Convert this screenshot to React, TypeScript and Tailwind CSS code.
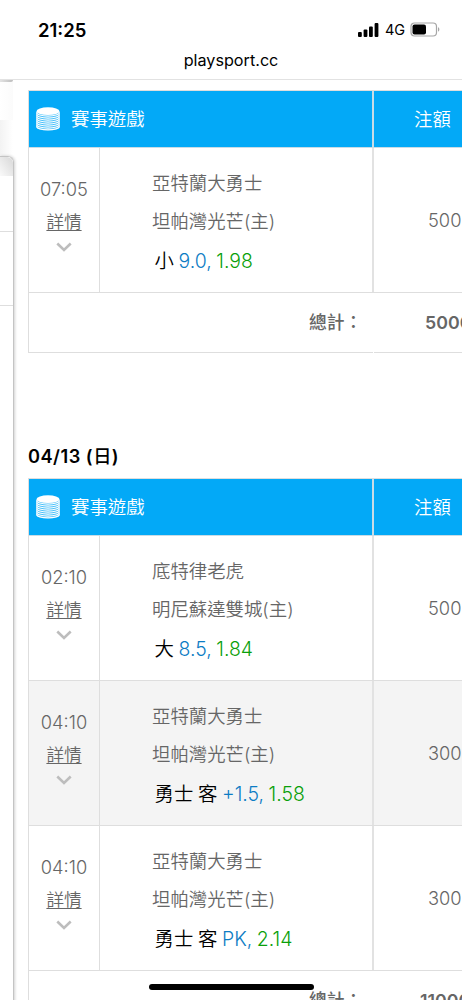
import React from 'react';

interface Bet {
  time: string;
  away: string;
  home: string;
  pick: string;
  line: string;
  odds: string;
  amount: string;
  shaded?: boolean;
}

const firstDay: Bet[] = [
  { time: '07:05', away: '亞特蘭大勇士', home: '坦帕灣光芒(主)', pick: '小', line: '9.0,', odds: '1.98', amount: '5000' },
];

const secondDay: Bet[] = [
  { time: '02:10', away: '底特律老虎', home: '明尼蘇達雙城(主)', pick: '大', line: '8.5,', odds: '1.84', amount: '5000' },
  { time: '04:10', away: '亞特蘭大勇士', home: '坦帕灣光芒(主)', pick: '勇士 客', line: '+1.5,', odds: '1.58', amount: '3000', shaded: true },
  { time: '04:10', away: '亞特蘭大勇士', home: '坦帕灣光芒(主)', pick: '勇士 客', line: 'PK,', odds: '2.14', amount: '3000' },
];

const CoinsIcon = () => (
  <svg className="w-6 h-6 shrink-0" viewBox="0 0 24 24" fill="none">
    <path d="M.5 4.500v15c0 2.200 5.100 3.800 11.500 3.800s11.500-1.600 11.500-3.800v-15z" fill="#fff" fillOpacity=".25" />
    {[5.5, 7.5, 9.5, 11.5, 13.5, 15.5, 17.5, 19.3].map((y) => (
      <path key={y} d={`M.5 ${y}c0 2 5 3.600 11.500 3.600s11.500-1.600 11.500-3.600`} stroke="#fff" strokeWidth="1.200" />
    ))}
    <path d="M.8 4.500v15M23.200 4.500v15" stroke="#fff" strokeOpacity=".6" />
    <ellipse cx="12" cy="4.200" rx="11.500" ry="3.900" fill="#fff" />
  </svg>
);

const Chevron = () => (
  <svg className="w-4 h-[10px] mt-[4px]" viewBox="0 0 16 10" fill="none">
    <path d="M1.300 1.500 8 7.900l6.700-6.400" stroke="#bdbdbd" strokeWidth="2.600" />
  </svg>
);

const StatusBar = () => (
  <header className="h-20 shrink-0 border-b border-[#e2e2e2] bg-white text-black">
    <div className="flex h-[48px] items-center pt-[11px] pl-[38px] pr-[22px]">
      <span className="text-[18.5px] font-semibold leading-6">21:25</span>
      <svg className="ml-auto w-[21px] h-[14px]" viewBox="0 0 21 14">
        <rect x="0" y="9" width="3.800" height="5" rx="1" />
        <rect x="5.600" y="6.500" width="3.800" height="7.500" rx="1" />
        <rect x="11" y="3.500" width="3.800" height="10.500" rx="1" />
        <rect x="16.600" y="0" width="3.800" height="14" rx="1" />
      </svg>
      <span className="ml-[6px] w-[21px] text-[14.5px] leading-5">4G</span>
      <svg className="ml-[4px] w-[30px] h-[15px]" viewBox="0 0 30 15">
        <rect x="1" y="1" width="25.500" height="13" rx="3.500" fill="none" stroke="#a6a6a6" strokeWidth="1.200" />
        <rect x="2.500" y="2.500" width="13.500" height="10" rx="2" />
        <path d="M28 5.300c1.800.6 1.800 3.800 0 4.400z" fill="#a6a6a6" />
      </svg>
    </div>
    <div className="text-center text-[16.2px] leading-6">playsport.cc</div>
  </header>
);

const SideEdge = () => (
  <aside className="w-[18px] shrink-0 overflow-hidden">
    <div className="h-[2px] w-[13px] rounded-br bg-linear-to-r from-[#e4e4e4] to-[#bdbdbd]" />
    <div className="h-[38px] w-[13px] bg-linear-to-r from-white to-[#fbfbfb]" />
    <div className="h-[36px] w-[13px] bg-linear-to-r from-[#f3f3f3] to-white" />
    <div className="h-[900px] w-[14px] rounded-tr-md border-t border-r border-[#c4c4c4] shadow-[1px_0_3px_rgba(0,0,0,0.18)]">
      <div className="h-[19px] rounded-tr-md bg-linear-to-bl from-[#d8d8d8] to-[#fafafa]" />
      <div className="h-[56px] border-b border-[#dedede]" />
      <div className="h-[74px] border-b border-[#dedede]" />
    </div>
  </aside>
);

const BetRow: React.FC<{ bet: Bet }> = ({ bet }) => (
  <div className={`flex h-[145px] border-b border-[#dedede] ${bet.shaded ? 'bg-[#f4f4f4]' : ''}`}>
    <div className="flex w-[71px] shrink-0 flex-col items-center border-r border-[#dedede] pt-[25px]">
      <span className="text-[18.3px] leading-[33px]">{bet.time}</span>
      <a href="#" className="text-[17.6px] leading-8 underline decoration-1 underline-offset-[2px]">詳情</a>
      <Chevron />
    </div>
    <div className="w-[274px] shrink-0 border-r-2 border-[#e2e2e2] pt-[16px] pl-[52px] whitespace-nowrap">
      <p className="text-[18.4px] leading-[38px]">{bet.away}</p>
      <p className="text-[18.4px] leading-[38px]">{bet.home}</p>
      <p className="pt-[1px] pl-[2.500px] text-[19.4px] leading-[40px] text-black [word-spacing:-0.8px]">
        {bet.pick} <span className="text-[#0c7cc4]">{bet.line}</span> <span className="text-[#0a9f0a]">{bet.odds}</span>
      </p>
    </div>
    <div className="pt-[56px] pl-[54px] text-[18.3px] leading-8">{bet.amount}</div>
  </div>
);

const BetTable: React.FC<{ bets: Bet[]; total: string; totalClass: string }> = ({ bets, total, totalClass }) => (
  <section className="w-[600px] border-t border-l border-[#dedede] font-[350] text-[#666]">
    <div className="flex h-[57px] border-b border-[#c9dce6] bg-[#03a9f7] text-[18.4px] text-white">
      <div className="flex w-[345px] shrink-0 items-center border-r-2 border-[#c9dce6] pl-[7px]">
        <CoinsIcon />
        <span className="ml-[11px] pt-[1px]">賽事遊戲</span>
      </div>
      <div className="flex items-center pt-[1px] pl-[40px]">注額</div>
    </div>
    {bets.map((bet, index) => (
      <BetRow key={index} bet={bet} />
    ))}
    <div className="flex h-[60px] text-[17.8px] leading-[60px]">
      <div className="w-[344px] shrink-0 border-b border-[#dedede] pl-[280px] font-medium whitespace-nowrap">總計：</div>
      <div className={`ml-[1px] grow border-b border-[#dedede] font-semibold ${totalClass}`}>{total}</div>
    </div>
  </section>
);

const App: React.FC = () => (
  <div className="relative flex h-[1000px] w-[462px] flex-col overflow-hidden bg-white font-['Inter','Noto_Sans_CJK_TC',sans-serif]">
    <StatusBar />
    <div className="flex min-h-0 grow overflow-hidden">
      <SideEdge />
      <main className="ml-[10px] min-w-0 grow overflow-hidden pt-[10px]">
        <BetTable bets={firstDay} total="5000" totalClass="pl-[51px]" />
        <h2 className="mt-[92px] mb-[11px] text-[18.2px] font-semibold leading-[22px] tracking-[0.5px] text-black">
          04/13 (<span className="font-medium">日</span>)
        </h2>
        <BetTable bets={secondDay} total="11000" totalClass="pl-[46px]" />
      </main>
    </div>
    <div className="absolute bottom-[10px] left-[149px] h-[6px] w-[165px] rounded-full bg-black" />
  </div>
);

export default App;
